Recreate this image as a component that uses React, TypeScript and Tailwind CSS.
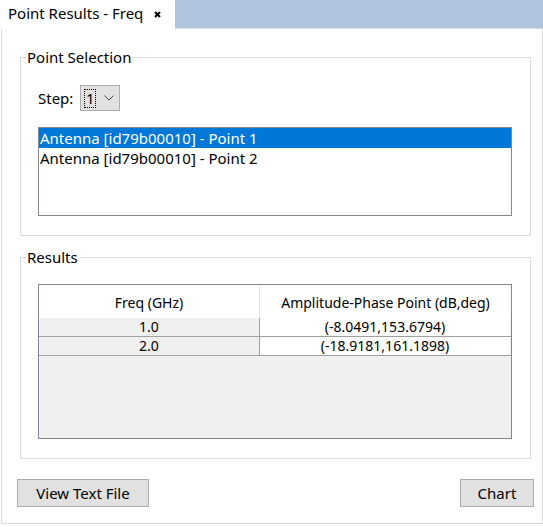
import React from "react";

const font = { fontFamily: '"Noto Sans", "Open Sans", sans-serif' };

export default function App() {
  return (
    <div
      className="w-[543px] h-[527px] bg-white text-[14px] text-black leading-[18px] flex flex-col"
      style={font}
    >
      {/* top tab bar */}
      <div className="flex h-[29px]">
        <div className="w-[175px] h-[29px] bg-white flex items-center pl-[8px] pb-[3px]">
          <span className="text-[15px]">Point Results - Freq</span>
          <svg className="ml-[11px] mt-[2px]" width="7" height="7" viewBox="0 0 7 7">
            <path d="M1 1 L6 6 M6 1 L1 6" stroke="#000" strokeWidth="2" />
          </svg>
        </div>
        <div className="flex-1 bg-[#b0c4de] border-b border-[#d9d9d9]" />
      </div>

      {/* panel */}
      <div className="ml-[1px] w-[542px] h-[495px] border-l border-r border-b border-[#d9d9d9] flex flex-col">
        <div className="pl-[18px] pr-[10px] pt-[20px]">
          <fieldset className="border border-[#dcdcdc] w-[511px] pl-[17px] pb-[19px]">
            <legend className="-ml-[12px] px-[1px] text-[15px] leading-[16px]">Point Selection</legend>
            <div className="flex items-center mt-[20px] h-[26px]">
              <span className="text-[15px]">Step:</span>
              <div className="ml-[7px] w-[40px] h-[26px] bg-[#e1e1e1] border border-[#adadad] flex items-center pl-[3px]">
                <div className="h-[19px] w-[12px] border border-dotted border-black flex items-center justify-center text-[15px] leading-[17px]">
                  1
                </div>
                <svg className="ml-[8px]" width="10" height="6" viewBox="0 0 10 6">
                  <path d="M0.5 0.5 L5 5 L9.5 0.5" stroke="#444" strokeWidth="1" fill="none" />
                </svg>
              </div>
            </div>
            <div className="mt-[16px] w-[474px] h-[89px] border border-[#828790] bg-white">
              <div className="h-[20px] bg-[#0078d7] text-white pl-[1px] text-[15px] leading-[20px]">
                Antenna [id79b00010] - Point 1
              </div>
              <div className="h-[20px] pl-[1px] text-[15px] leading-[20px]">
                Antenna [id79b00010] - Point 2
              </div>
            </div>
          </fieldset>

          <fieldset className="mt-[13px] border border-[#dcdcdc] w-[511px] pl-[17px] pb-[19px]">
            <legend className="-ml-[12px] px-[1px] text-[15px] leading-[16px]">Results</legend>
            <div className="mt-[19px] w-[474px] h-[155px] border border-[#828790] bg-[#f0f0f0] flex flex-col">
              <div className="flex h-[33px] bg-white">
                <div className="w-[221px] border-r border-[#e5e5e5] flex items-center justify-center text-[14px] pt-[3px]">
                  Freq (GHz)
                </div>
                <div className="flex-1 flex items-center justify-center text-[14px] pt-[3px]">
                  Amplitude-Phase Point (dB,deg)
                </div>
              </div>
              <div className="flex h-[19px] border-b border-[#a0a0a0]">
                <div className="w-[221px] border-r border-[#a0a0a0] bg-[#f0f0f0] flex items-center justify-center text-[14px] leading-[18px]">
                  1.0
                </div>
                <div className="w-[250px] bg-white flex items-center justify-center text-[14px] leading-[18px]">
                  (-8.0491,153.6794)
                </div>
              </div>
              <div className="flex h-[19px] border-b border-[#a0a0a0]">
                <div className="w-[221px] border-r border-[#a0a0a0] bg-[#f0f0f0] flex items-center justify-center text-[14px] leading-[18px]">
                  2.0
                </div>
                <div className="w-[250px] bg-white flex items-center justify-center text-[14px] leading-[18px]">
                  (-18.9181,161.1898)
                </div>
              </div>
            </div>
          </fieldset>
        </div>

        <div className="flex justify-between pl-[15px] pr-[8px] mt-[20px]">
          <button className="w-[132px] h-[28px] bg-[#e1e1e1] border border-[#adadad] text-[15px] leading-[18px] pb-[1px]">
            View Text File
          </button>
          <button className="w-[74px] h-[28px] bg-[#e1e1e1] border border-[#adadad] text-[15px] leading-[18px] pb-[1px]">
            Chart
          </button>
        </div>
      </div>
    </div>
  );
}
